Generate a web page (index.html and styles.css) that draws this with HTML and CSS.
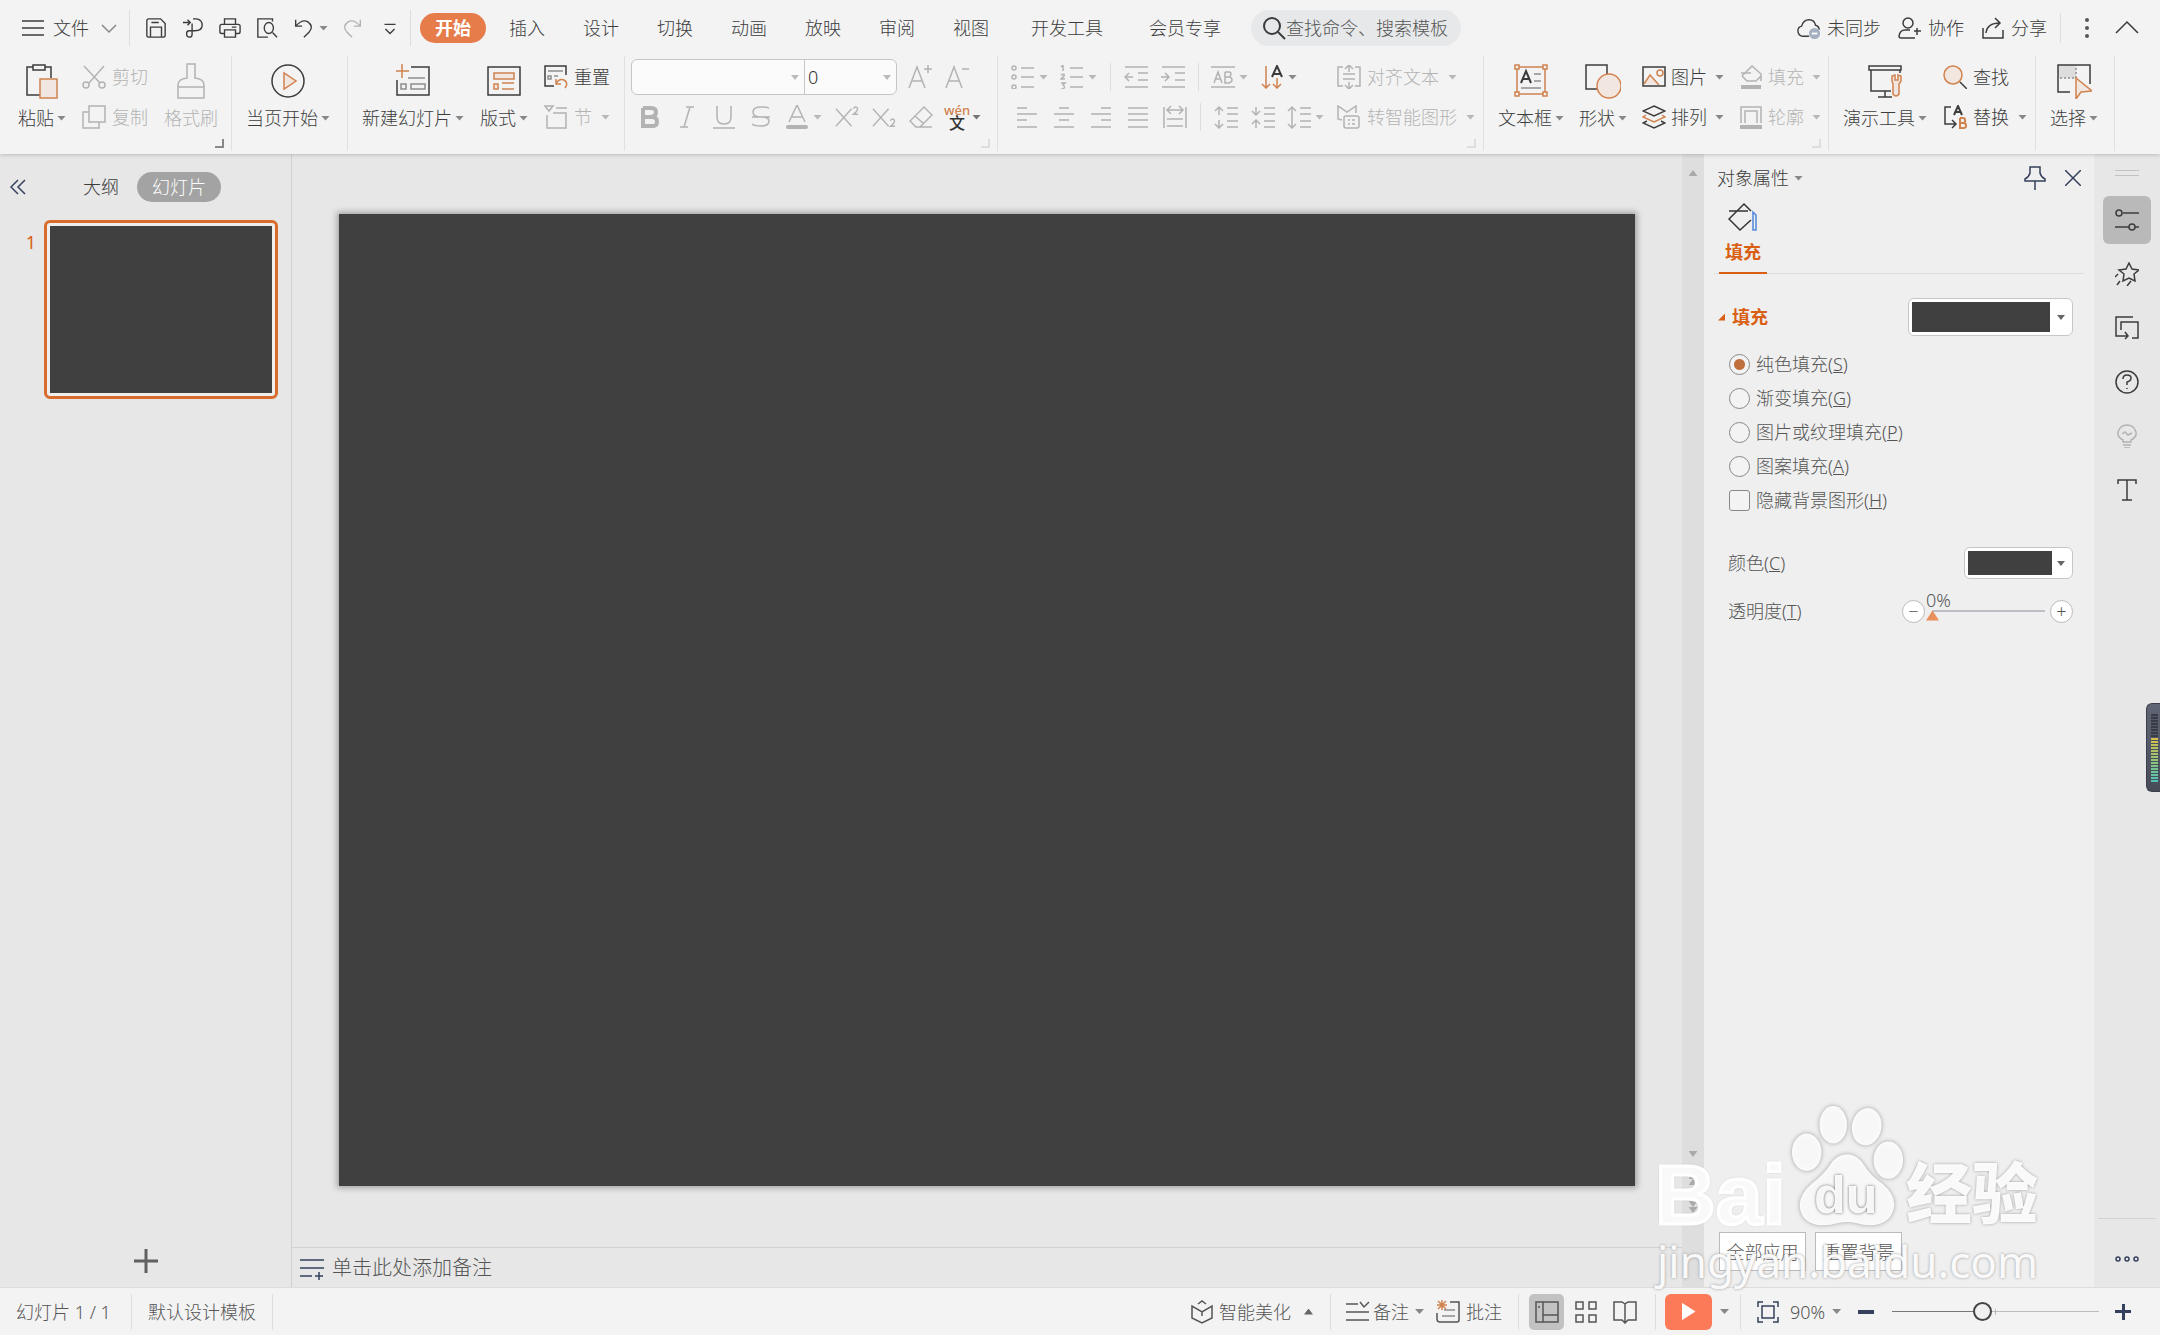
FILE: index.html
```html
<!DOCTYPE html>
<html lang="zh-CN">
<head>
<meta charset="utf-8">
<title>演示文稿</title>
<link rel="stylesheet" href="styles.css">
</head>
<body>
<svg class="sprite" aria-hidden="true">
  <symbol id="menu" viewBox="0 0 24 24"><path d="M1 5H23M1 12H23M1 19H23"/></symbol>
  <symbol id="down" viewBox="0 0 16 16"><path d="M1 5L8 12L15 5"/></symbol>
  <symbol id="save" viewBox="0 0 24 24"><path d="M4 2H17L22 7V20Q22 22 20 22H4Q2 22 2 20V4Q2 2 4 2ZM6 22V11H18V22M7 6H15"/></symbol>
  <symbol id="pdf" viewBox="0 0 24 24"><path d="M1 6H9M6 3L9 6L6 9M12 2H16Q22 3 22 9Q22 15 14 15H8Q5 15 5 18Q5 22 8 22Q11 22 11 19V7"/></symbol>
  <symbol id="print" viewBox="0 0 24 24"><path d="M6 8V2H18V8M6 18H3Q1 18 1 16V10Q1 8 3 8H21Q23 8 23 10V16Q23 18 21 18H18M6 14H18V22H6ZM14 11H19"/></symbol>
  <symbol id="preview" viewBox="0 0 24 24"><path d="M18 5V2H2V22H13M18 17L23 22"/><ellipse cx="14" cy="12" rx="5" ry="6"/></symbol>
  <symbol id="undo" viewBox="0 0 24 24"><path d="M4 3V10H11M4 10Q11 2 17 5Q24 10 19 16L13 22"/></symbol>
  <symbol id="redo" viewBox="0 0 24 24"><path d="M20 3V10H13M20 10Q13 2 7 5Q0 10 5 16L11 22"/></symbol>
  <symbol id="more" viewBox="0 0 24 24"><path d="M6 8H18M7 13L12 18L17 13"/></symbol>
  <symbol id="search" viewBox="0 0 24 24"><circle cx="10" cy="10" r="8" stroke-width="2"/><path d="M16 16L23 23" stroke-width="2"/></symbol>
  <symbol id="cloud" viewBox="0 0 26 24"><path d="M13 21H6Q1 20 1 15Q1 11 5 10Q7 3 13 3Q19 3 20 9Q24 10 24 14"/><circle cx="19" cy="18" r="6" fill="#a5afc1" stroke="none"/><path d="M16 18H22" stroke="#fff" stroke-width="2"/></symbol>
  <symbol id="person" viewBox="0 0 24 24"><circle cx="10" cy="7" r="5"/><path d="M12 14H7Q2 14 1 20Q1 22 3 22H17M16 15H23M19 12V19"/></symbol>
  <symbol id="share" viewBox="0 0 24 24"><path d="M2 12V22H22V14M5 17Q6 7 19 7M14 2L19 7L14 12"/></symbol>
  <symbol id="up" viewBox="0 0 24 24"><path d="M1 17L12 6L23 17"/></symbol>

  <symbol id="paste" viewBox="0 0 36 36"><path d="M9 4H3V32H16M21 4H27V15M9 2H21V7H9Z"/><path class="a f" d="M16 16H33V35H16Z"/></symbol>
  <symbol id="cut" viewBox="0 0 24 24"><path d="M2 1L18 18M22 1L7 18"/><circle cx="4" cy="20" r="3"/><circle cx="20" cy="20" r="3"/></symbol>
  <symbol id="copy" viewBox="0 0 24 24"><path d="M7 1H23V17H7ZM7 7H1V23H17V17"/></symbol>
  <symbol id="brush" viewBox="0 0 36 36"><path d="M14 1H22V15Q31 16 31 22V35H5V22Q5 16 14 15ZM5 24H31"/></symbol>
  <symbol id="playc" viewBox="0 0 36 36"><circle cx="18" cy="18" r="16"/><path class="a f" d="M14 10V26L26 18Z"/></symbol>
  <symbol id="newslide" viewBox="0 0 36 36"><path d="M16 4H34V32H2V17"/><path class="a" d="M1 8H14M7 1V15"/><path class="g" d="M13 15H30M6 21H11V26H6ZM16 21H30V26H16Z"/></symbol>
  <symbol id="layout" viewBox="0 0 36 36"><path d="M2 4H34V32H2Z"/><path class="a f" d="M8 10H28V16H8ZM8 21H12V26H8Z"/><path class="a" d="M16 20H28M16 26H28"/></symbol>
  <symbol id="reset" viewBox="0 0 24 24"><path d="M10 21H1V1H22V10"/><path class="g" d="M4 6H19M4 11H7V14H4ZM10 11H14"/><path class="a" d="M12 14V19H17M12 19Q15 13 20 15Q25 18 21 23"/></symbol>
  <symbol id="section" viewBox="0 0 24 24"><path d="M1 1H9L5 6ZM12 3H23M3 10V23H22V8H9"/></symbol>

  <symbol id="aplus" viewBox="0 0 24 24"><path d="M1 23L9 2L17 23M4 16H14M16 4H24M20 0V8"/></symbol>
  <symbol id="aminus" viewBox="0 0 24 24"><path d="M1 23L9 2L17 23M4 16H14M17 4H24"/></symbol>
  <symbol id="bold" viewBox="0 0 24 24"><path stroke-width="4" d="M5 3H13Q18 3 18 7Q18 12 12 12H5M5 12H14Q19 12 19 17Q19 21 14 21H5V3"/></symbol>
  <symbol id="italic" viewBox="0 0 24 24"><path d="M11 2H19M15 2L9 22M5 22H13"/></symbol>
  <symbol id="under" viewBox="0 0 24 24"><path d="M5 1V12Q5 19 12 19Q19 19 19 12V1M1 23H23"/></symbol>
  <symbol id="strike" viewBox="0 0 24 24"><path d="M20 3Q18 2 12 2Q4 2 4 7Q4 12 12 12Q20 12 20 16Q20 21 12 21Q5 21 3 19M3 12H21"/></symbol>
  <symbol id="fontcolor" viewBox="0 0 24 24"><path d="M4 17L12 0L20 17M7 12H17"/><path stroke-width="4" stroke-linecap="round" d="M3 22H21"/></symbol>
  <symbol id="sup" viewBox="0 0 26 24"><path d="M1 3L18 22M18 3L1 22M20 3Q21 0 24 2Q26 4 20 9H25"/></symbol>
  <symbol id="sub" viewBox="0 0 26 24"><path d="M1 3L18 22M18 3L1 22M20 16Q21 13 24 15Q26 17 20 22H25"/></symbol>
  <symbol id="erase" viewBox="0 0 24 24"><path d="M7 22L1 16L15 2L23 10L11 22ZM6 11L15 19M6 22H23"/></symbol>

  <symbol id="bullets" viewBox="0 0 24 24"><path d="M10 3H23M10 12H23M10 22H23"/><circle cx="3" cy="3" r="2"/><circle cx="3" cy="12" r="2"/><circle cx="3" cy="22" r="2"/></symbol>
  <symbol id="numbers" viewBox="0 0 24 24"><path d="M10 3H23M10 12H23M10 22H23M1 2L3 0V6M1 10Q5 8 4 11L1 14H5M1 18H5L3 20Q6 22 3 24H1"/></symbol>
  <symbol id="outdent" viewBox="0 0 24 24"><path d="M1 2H24M14 8H24M14 15H24M1 22H24M9 12H1M5 8L1 12L5 16"/></symbol>
  <symbol id="indent" viewBox="0 0 24 24"><path d="M1 2H24M14 8H24M14 15H24M1 22H24M0 12H8M4 8L8 12L4 16"/></symbol>
  <symbol id="ab" viewBox="0 0 24 24"><path d="M0 2H24M0 22H24M3 18L7 7L11 18M5 14H9M14 7V18H18Q21 17 21 15Q21 12 18 12H14M18 12Q20 11 20 9Q20 7 18 7H14"/></symbol>
  <symbol id="sort" viewBox="0 0 24 24"><path class="a" d="M6 1V23M2 19L6 23L10 19M17 13V23M13 19L17 23L21 19"/><path stroke-width="2" d="M12 12L17 1L22 12M14 9H20"/></symbol>
  <symbol id="aligntext" viewBox="0 0 24 24"><path d="M6 2H1V21H6M18 2H23V21H18M6 9H18M6 14H18M12 7V0M8 4L12 0L16 4M12 17V24M8 20L12 24L16 20"/></symbol>
  <symbol id="left" viewBox="0 0 24 24"><path d="M2 3H12M2 9H22M2 15H12M2 22H22"/></symbol>
  <symbol id="center" viewBox="0 0 24 24"><path d="M7 3H17M2 9H22M7 15H17M2 22H22"/></symbol>
  <symbol id="right" viewBox="0 0 24 24"><path d="M12 3H22M2 9H22M12 15H22M2 22H22"/></symbol>
  <symbol id="justify" viewBox="0 0 24 24"><path d="M2 3H22M2 9H22M2 15H22M2 22H22"/></symbol>
  <symbol id="distribute" viewBox="0 0 24 24"><path d="M1 2V23M23 2V23M4 14H20M4 21H20M4 5H20M8 1L4 5L8 9M16 1L20 5L16 9"/></symbol>
  <symbol id="spaceup" viewBox="0 0 24 24"><path d="M13 3H24M13 9H24M13 16H24M13 22H24M5 10V2M1 6L5 2L9 6M5 15V23M1 19L5 23L9 19"/></symbol>
  <symbol id="spacedown" viewBox="0 0 24 24"><path d="M13 3H24M13 9H24M13 16H24M13 22H24M5 2V10M1 6L5 10L9 6M5 23V15M1 19L5 15L9 19"/></symbol>
  <symbol id="linespace" viewBox="0 0 24 24"><path d="M13 3H24M13 9H24M13 16H24M13 22H24M5 2V23M1 6L5 2L9 6M1 19L5 23L9 19"/></symbol>
  <symbol id="smart" viewBox="0 0 24 24"><path d="M5 15L1 14V1L10 7L19 1V8"/><rect x="7" y="11" width="15" height="12" rx="2"/><path d="M11 15H13M15 15H18M11 19H13M15 19H18"/></symbol>

  <symbol id="textbox" viewBox="0 0 36 36"><path class="a" d="M4 4H32V31H4Z"/><path class="a bg" d="M2 2H6V6H2ZM30 2H34V6H30ZM2 29H6V33H2ZM30 29H34V33H30Z"/><path stroke-width="2" d="M8 20L13 8L18 20M10 16H16"/><path class="g" d="M21 11H28M21 18H28M8 25H28"/></symbol>
  <symbol id="shapes" viewBox="0 0 36 36"><path d="M1 2H22V26H1Z"/><circle class="a f" cx="24" cy="23" r="12"/></symbol>
  <symbol id="picture" viewBox="0 0 24 24"><path d="M1 2H23V21H1Z"/><path class="a f" d="M2 19L8 10L17 20"/><circle class="a" cx="18" cy="8" r="3"/></symbol>
  <symbol id="arrange" viewBox="0 0 24 24"><path d="M12 1L23 6L12 11L1 6Z"/><path class="a" d="M4 10L1 12L12 17L23 12L20 10"/><path d="M5 16L1 18L12 23L23 18L19 16"/></symbol>
  <symbol id="fillc" viewBox="0 0 24 24"><path d="M3 11L13 1L22 9V16M3 11L8 16H17L22 11M2 8H12"/><path stroke-width="4" d="M2 22H22"/></symbol>
  <symbol id="outline" viewBox="0 0 24 24"><path d="M2 18V2H22V18M6 18V6H18V18"/><path stroke-width="4" d="M1 22H23"/></symbol>
  <symbol id="present" viewBox="0 0 36 36"><path d="M2 3H34V7H2ZM4 7V28H24M18 28V34M11 34H25M33 7V10"/><path class="a f" d="M25 13V18L26 21V31Q29 35 32 31V21L34 18V13L31 12V17H28V12Z"/></symbol>
  <symbol id="find" viewBox="0 0 24 24"><circle class="a f" cx="10" cy="10" r="9"/><path d="M17 17L24 24"/></symbol>
  <symbol id="replace" viewBox="0 0 24 24"><path d="M8 2H2V19H12M9 15L13 19L9 23"/><path stroke-width="2" d="M11 10L15 1L19 10M13 7H18"/><path class="a" stroke-width="2" d="M17 13V23H21Q24 22 23 20Q23 18 20 18H17M20 18Q23 17 22 15Q22 13 20 13H17"/></symbol>
  <symbol id="select" viewBox="0 0 36 36"><path fill="#ddd" stroke="none" d="M2 2H20V15H2Z"/><path d="M14 29H2V2H34V21"/><path class="g" stroke-dasharray="2 2" d="M4 15H20V3"/><path class="a f" d="M20 15V36L25 29L36 28Z"/></symbol>

  <symbol id="collapse" viewBox="0 0 16 16"><path d="M8 1L1 8L8 15M15 1L8 8L15 15"/></symbol>
  <symbol id="plus" viewBox="0 0 24 24"><path stroke-width="3" d="M0 12H24M12 0V24"/></symbol>
  <symbol id="notes" viewBox="0 0 24 24"><path d="M0 4H24M0 12H24M0 20H12M15 20H23M19 16V24"/></symbol>
  <symbol id="pin" viewBox="0 0 24 24"><path d="M7 1H17V7Q18 11 22 13V15H2V13Q6 11 7 7ZM12 15V24"/></symbol>
  <symbol id="close" viewBox="0 0 16 16"><path d="M0 0L16 16M16 0L0 16"/></symbol>
  <symbol id="bucket" viewBox="0 0 30 30"><path d="M23 9L16 2L1 17L12 28L23 18M1 9H20"/><path stroke="#4f86dc" d="M25 28V10L28 13V28Z"/></symbol>
  <symbol id="settings" viewBox="0 0 24 24"><path d="M8 5H24M0 19H14M20 19H24"/><circle cx="4" cy="5" r="3"/><circle cx="17" cy="19" r="3"/></symbol>
  <symbol id="star" viewBox="0 0 24 24"><path d="M14 1L17 7L24 8L19 12L20 19L14 16L8 19L9 12L4 8L11 7ZM3 12L0 15M5 19L2 23M16 19L12 24"/></symbol>
  <symbol id="swap" viewBox="0 0 24 24"><path d="M18 1H1V20H13M10 16L13 20L10 23M6 14V6H23V22H17"/></symbol>
  <symbol id="help" viewBox="0 0 24 24"><circle cx="12" cy="12" r="11"/><path d="M8 9Q8 5 12 5Q16 5 16 8Q16 11 12 12V15M12 18V19"/></symbol>
  <symbol id="bulb" viewBox="0 0 24 24"><path d="M8 18V16Q2 13 3 8Q5 1 12 1Q19 1 21 8Q22 13 16 16V18ZM8 21H16M9 24H15M7 10L10 8L13 11L17 9"/></symbol>
  <symbol id="text" viewBox="0 0 24 24"><path d="M3 6V2H21V6M12 2V22M7 22H17"/></symbol>
  <symbol id="dots" viewBox="0 0 24 8"><circle cx="3" cy="4" r="2"/><circle cx="12" cy="4" r="2"/><circle cx="21" cy="4" r="2"/></symbol>
  <symbol id="box" viewBox="0 0 24 24"><path d="M8 4L12 1L16 4M2 6V18L12 23L22 18V6L12 12ZM12 12V16"/></symbol>
  <symbol id="remark" viewBox="0 0 24 24"><path d="M0 4H12M14 2L18 7L23 2M0 12H23M0 20H23"/></symbol>
  <symbol id="comment" viewBox="0 0 24 24"><path d="M14 2H23V20Q23 22 21 22H4Q1 22 1 19V13"/><path class="g" d="M8 10H19M6 16H19"/><path class="a" d="M6 0V10M1 5H11M2 1L10 9M10 1L2 9"/></symbol>
  <symbol id="normal" viewBox="0 0 24 24"><path d="M1 2H23V22H1ZM8 2V22M8 15H23M4 6V8"/></symbol>
  <symbol id="grid" viewBox="0 0 24 24"><path d="M2 2H9V9H2ZM15 2H22V9H15ZM2 15H9V22H2ZM15 15H22V22H15Z"/></symbol>
  <symbol id="book" viewBox="0 0 24 24"><path d="M12 4L9 2H1V20H9L12 23L15 20H23V2H15L12 4V23"/></symbol>
  <symbol id="fit" viewBox="0 0 24 24"><path d="M2 7V2H7M17 2H22V7M22 17V22H17M7 22H2V17M6 6H18V18H6Z"/></symbol>
</svg>

<div class="app">
  <header class="menu">
    <button class="file"><svg class="i"><use href="#menu"/></svg>文件<svg class="i i16 light"><use href="#down"/></svg></button>
    <span class="vline"></span>
    <div class="quick">
      <button class="tool" aria-label="保存"><svg class="i"><use href="#save"/></svg></button>
      <button class="tool" aria-label="输出PDF"><svg class="i"><use href="#pdf"/></svg></button>
      <button class="tool" aria-label="打印"><svg class="i"><use href="#print"/></svg></button>
      <button class="tool" aria-label="预览"><svg class="i"><use href="#preview"/></svg></button>
      <button class="tool drop" aria-label="撤销"><svg class="i"><use href="#undo"/></svg></button>
      <button class="tool off" aria-label="恢复"><svg class="i"><use href="#redo"/></svg></button>
      <button class="tool" aria-label="更多"><svg class="i"><use href="#more"/></svg></button>
    </div>
    <span class="vline"></span>
    <nav class="tabs">
      <button class="tab active">开始</button>
      <button class="tab">插入</button><button class="tab">设计</button><button class="tab">切换</button><button class="tab">动画</button><button class="tab">放映</button><button class="tab">审阅</button><button class="tab">视图</button>
      <button class="tab wide">开发工具</button><button class="tab wide">会员专享</button>
    </nav>
    <label class="find"><svg class="i"><use href="#search"/></svg><input type="text" placeholder="查找命令、搜索模板" aria-label="查找命令"></label>
    <div class="account">
      <button><svg class="i"><use href="#cloud"/></svg>未同步</button>
      <button><svg class="i"><use href="#person"/></svg>协作</button>
      <button><svg class="i"><use href="#share"/></svg>分享</button>
      <span class="vline"></span>
      <button class="kebab" aria-label="选项"><i></i><i></i><i></i></button>
      <button aria-label="收起"><svg class="i"><use href="#up"/></svg></button>
    </div>
  </header>

  <section class="ribbon">
    <div class="group clip corner">
      <button class="big"><svg class="i i36"><use href="#paste"/></svg><span class="drop">粘贴</span></button>
      <div class="stack off">
        <button class="item"><svg class="i"><use href="#cut"/></svg>剪切</button>
        <button class="item"><svg class="i"><use href="#copy"/></svg>复制</button>
      </div>
      <button class="big off"><svg class="i i36"><use href="#brush"/></svg><span>格式刷</span></button>
    </div>
    <div class="group">
      <button class="big"><svg class="i i36"><use href="#playc"/></svg><span class="drop">当页开始</span></button>
    </div>
    <div class="group">
      <button class="big"><svg class="i i36"><use href="#newslide"/></svg><span class="drop">新建幻灯片</span></button>
      <button class="big"><svg class="i i36"><use href="#layout"/></svg><span class="drop">版式</span></button>
      <div class="stack">
        <button class="item"><svg class="i"><use href="#reset"/></svg>重置</button>
        <button class="item off drop"><svg class="i"><use href="#section"/></svg>节</button>
      </div>
    </div>
    <div class="group fonts corner soft">
      <div class="stack">
        <div class="row">
          <div class="combo">
            <span class="pick name"><select aria-label="字体"><option></option></select></span>
            <span class="pick size"><select aria-label="字号"><option>0</option></select></span>
          </div>
          <button class="tool off" aria-label="增大字号"><svg class="i"><use href="#aplus"/></svg></button>
          <button class="tool off" aria-label="减小字号"><svg class="i"><use href="#aminus"/></svg></button>
        </div>
        <div class="row off">
          <button class="tool" aria-label="加粗"><svg class="i"><use href="#bold"/></svg></button>
          <button class="tool" aria-label="倾斜"><svg class="i"><use href="#italic"/></svg></button>
          <button class="tool" aria-label="下划线"><svg class="i"><use href="#under"/></svg></button>
          <button class="tool" aria-label="删除线"><svg class="i"><use href="#strike"/></svg></button>
          <button class="tool drop" aria-label="字体颜色"><svg class="i"><use href="#fontcolor"/></svg></button>
          <button class="tool" aria-label="上标"><svg class="i"><use href="#sup"/></svg></button>
          <button class="tool" aria-label="下标"><svg class="i"><use href="#sub"/></svg></button>
          <button class="tool" aria-label="清除格式"><svg class="i"><use href="#erase"/></svg></button>
          <button class="tool drop pinyin" aria-label="拼音"><span><b>wén</b><em>文</em></span></button>
        </div>
      </div>
    </div>
    <div class="group para corner soft">
      <div class="stack off">
        <div class="row">
          <button class="tool drop" aria-label="项目符号"><svg class="i"><use href="#bullets"/></svg></button>
          <button class="tool drop" aria-label="编号"><svg class="i"><use href="#numbers"/></svg></button>
          <span class="vsep"></span>
          <button class="tool" aria-label="减少缩进"><svg class="i"><use href="#outdent"/></svg></button>
          <button class="tool" aria-label="增加缩进"><svg class="i"><use href="#indent"/></svg></button>
          <span class="vsep"></span>
          <button class="tool drop" aria-label="字符缩放"><svg class="i"><use href="#ab"/></svg></button>
          <button class="tool drop on" aria-label="文字方向"><svg class="i"><use href="#sort"/></svg></button>
        </div>
        <div class="row second">
          <button class="tool" aria-label="左对齐"><svg class="i"><use href="#left"/></svg></button>
          <button class="tool" aria-label="居中"><svg class="i"><use href="#center"/></svg></button>
          <button class="tool" aria-label="右对齐"><svg class="i"><use href="#right"/></svg></button>
          <button class="tool" aria-label="两端对齐"><svg class="i"><use href="#justify"/></svg></button>
          <button class="tool" aria-label="分散对齐"><svg class="i"><use href="#distribute"/></svg></button>
          <span class="vsep"></span>
          <button class="tool" aria-label="增加行距"><svg class="i"><use href="#spaceup"/></svg></button>
          <button class="tool" aria-label="减少行距"><svg class="i"><use href="#spacedown"/></svg></button>
          <button class="tool drop" aria-label="行距"><svg class="i"><use href="#linespace"/></svg></button>
        </div>
      </div>
      <div class="stack off">
        <button class="item drop"><svg class="i"><use href="#aligntext"/></svg>对齐文本</button>
        <button class="item drop"><svg class="i"><use href="#smart"/></svg>转智能图形</button>
      </div>
    </div>
    <div class="group insert corner soft">
      <button class="big"><svg class="i i36"><use href="#textbox"/></svg><span class="drop">文本框</span></button>
      <button class="big"><svg class="i i36"><use href="#shapes"/></svg><span class="drop">形状</span></button>
      <div class="stack">
        <button class="item drop"><svg class="i"><use href="#picture"/></svg>图片</button>
        <button class="item drop"><svg class="i"><use href="#arrange"/></svg>排列</button>
      </div>
      <div class="stack off">
        <button class="item drop"><svg class="i"><use href="#fillc"/></svg>填充</button>
        <button class="item drop"><svg class="i"><use href="#outline"/></svg>轮廓</button>
      </div>
    </div>
    <div class="group">
      <button class="big"><svg class="i i36"><use href="#present"/></svg><span class="drop">演示工具</span></button>
      <div class="stack">
        <button class="item"><svg class="i"><use href="#find"/></svg>查找</button>
        <button class="item drop"><svg class="i"><use href="#replace"/></svg>替换</button>
      </div>
    </div>
    <div class="group">
      <button class="big"><svg class="i i36"><use href="#select"/></svg><span class="drop">选择</span></button>
    </div>
  </section>

  <main class="work">
    <aside class="slides">
      <div class="slides-head">
        <button class="navy" aria-label="折叠"><svg class="i i16"><use href="#collapse"/></svg></button>
        <button class="outline-tab">大纲</button>
        <button class="slides-tab">幻灯片</button>
      </div>
      <div class="thumb-row"><span>1</span><div class="thumb"><div></div></div></div>
      <button class="add" aria-label="新建幻灯片"><svg class="i"><use href="#plus"/></svg></button>
    </aside>
    <section class="editor">
      <div class="stage"><div class="slide"></div></div>
      <div class="notes"><svg class="i navy"><use href="#notes"/></svg>单击此处添加备注</div>
    </section>
    <div class="scroll"><i class="t up"></i><span></span><i class="t"></i><div class="pair"><i class="t up"></i><i class="t up"></i></div><div class="pair"><i class="t"></i><i class="t"></i></div></div>
    <aside class="props">
      <div class="props-head"><h2 class="drop">对象属性</h2><button class="navy" aria-label="固定"><svg class="i"><use href="#pin"/></svg></button><button class="navy" aria-label="关闭"><svg class="i i16"><use href="#close"/></svg></button></div>
      <div class="props-tabs"><button><svg class="i i30"><use href="#bucket"/></svg>填充</button></div>
      <div class="sect"><h3>填充</h3><span class="pick swatch"><select aria-label="填充样式"><option></option></select></span></div>
      <div class="choices">
        <label><input type="radio" name="fill" checked>纯色填充(<u>S</u>)</label>
        <label><input type="radio" name="fill">渐变填充(<u>G</u>)</label>
        <label><input type="radio" name="fill">图片或纹理填充(<u>P</u>)</label>
        <label><input type="radio" name="fill">图案填充(<u>A</u>)</label>
        <label><input type="checkbox">隐藏背景图形(<u>H</u>)</label>
      </div>
      <div class="prop"><label for="color">颜色(<u>C</u>)</label><span class="pick swatch small"><select id="color"><option></option></select></span></div>
      <div class="prop alpha"><label for="alpha">透明度(<u>T</u>)</label><div class="stepper"><button aria-label="减少">−</button><div class="track"><output>0%</output><input id="alpha" type="range" value="0"></div><button aria-label="增加">+</button></div></div>
      <div class="actions"><button>全部应用</button><button>重置背景</button></div>
    </aside>
    <nav class="rail">
      <i class="grip"></i>
      <button class="active" aria-label="属性"><svg class="i"><use href="#settings"/></svg></button>
      <button aria-label="动画"><svg class="i"><use href="#star"/></svg></button>
      <button aria-label="切换"><svg class="i"><use href="#swap"/></svg></button>
      <button aria-label="帮助"><svg class="i"><use href="#help"/></svg></button>
      <button class="off" aria-label="灵感"><svg class="i"><use href="#bulb"/></svg></button>
      <button aria-label="文本"><svg class="i"><use href="#text"/></svg></button>
      <button class="rail-more navy" aria-label="更多"><svg class="i"><use href="#dots"/></svg></button>
    </nav>
  </main>

  <footer class="status">
    <span class="count">幻灯片 1 / 1</span><span class="vline"></span><span class="template">默认设计模板</span><span class="vline"></span>
    <div class="status-right">
      <button class="beautify"><svg class="i"><use href="#box"/></svg>智能美化<i class="t up"></i></button>
      <span class="vline"></span>
      <div class="remarks"><button class="drop tight"><svg class="i"><use href="#remark"/></svg>备注</button><button><svg class="i"><use href="#comment"/></svg>批注</button></div>
      <span class="vline"></span>
      <div class="views">
        <button class="view active" aria-label="普通视图"><svg class="i"><use href="#normal"/></svg></button>
        <button class="view" aria-label="浏览视图"><svg class="i"><use href="#grid"/></svg></button>
        <button class="view" aria-label="阅读视图"><svg class="i"><use href="#book"/></svg></button>
      </div>
      <span class="vline"></span>
      <button class="play drop" aria-label="放映"><span></span></button>
      <span class="vline"></span>
      <div class="zoom"><button class="drop"><svg class="i navy"><use href="#fit"/></svg>90%</button><button class="step minus" aria-label="缩小"></button><input type="range" value="43" aria-label="缩放"><button class="step more" aria-label="放大"></button></div>
    </div>
  </footer>

  <div class="meter"><span></span><b></b></div>

  <div class="mark">
    <span class="bai">Bai</span>
    <svg class="paw" viewBox="0 0 120 126"><g fill="#fff" fill-opacity=".92"><ellipse cx="18" cy="48" rx="15" ry="19"/><ellipse cx="45" cy="20" rx="14" ry="19"/><ellipse cx="79" cy="22" rx="15" ry="19" transform="rotate(10 79 22)"/><ellipse cx="101" cy="56" rx="15" ry="19"/><path d="M59 50Q70 50 77 62Q82 71 95 80Q108 91 107 103Q104 120 87 122Q78 123 68 120Q59 118 50 120Q40 123 29 122Q13 119 11 104Q10 91 23 80Q35 71 41 62Q48 50 59 50Z"/></g></svg>
    <span class="du">du</span>
    <span class="jy">经验</span>
    <span class="url">jingyan.baidu.com</span>
  </div>
</div>
</body>
</html>
```
FILE: styles.css
```css
* { box-sizing: border-box; }

body {
  --accent: #d0824f;
  --navy: #35405c;
  margin: 0;
  font: 300 18px/24px "Noto Sans", "Noto Sans CJK SC", sans-serif;
  color: #3c3c3c;
  background: #f3f3f3;
}

button, input, select { font: inherit; color: inherit; }
button { border: 0; padding: 0; background: none; display: flex; align-items: center; white-space: nowrap; }
h2, h3 { margin: 0; font: inherit; }
.sprite { display: none; }

/* icons */
.i { width: 24px; height: 24px; flex: none; fill: none; stroke: currentColor; stroke-width: 1.5; overflow: visible; }
.i16 { width: 16px; height: 16px; }
.i30 { width: 30px; height: 30px; }
.i36 { width: 36px; height: 36px; }
.a { stroke: var(--accent); }
.f { fill: #f2e7e0; }
.g { stroke: #8f8f8f; }
.bg { fill: #f3f3f3; }
.light { color: #888; }
.navy { color: var(--navy); }
.off { color: #b3b3b3; }
.on { color: #3c3c3c; }

.drop::after {
  content: "";
  flex: none;
  width: 9px;
  height: 5px;
  margin-left: 3px;
  background: #888;
  clip-path: polygon(0 0, 100% 0, 50% 100%);
}
.off .drop:not(.on)::after, .off.drop::after { background: #b8b8b8; }
.t { display: block; width: 9px; height: 6px; background: #aaa; clip-path: polygon(0 0, 100% 0, 50% 100%); }
.t.up { clip-path: polygon(50% 0, 100% 100%, 0 100%); }
.vline { width: 1px; height: 36px; background: #dedede; flex: none; }

.app { position: relative; display: flex; flex-direction: column; min-height: 100vh; overflow: hidden; }

/* menu bar */
.menu { display: flex; align-items: center; height: 56px; }
.file { gap: 8px; width: 129px; padding-left: 21px; }
.file .light { margin-left: 4px; }
.quick { display: flex; padding: 0 2px 0 7px; }
.tool { width: 37px; height: 36px; justify-content: center; flex: none; }
.tool.drop { width: 49px; justify-content: flex-start; padding-left: 6px; }
.tool.drop::after { margin-left: 4px; }
.quick .i { padding: 1px; }
.tabs { display: flex; align-items: center; padding-left: 9px; }
.tab { padding: 0 19px; height: 30px; }
.tab.wide { padding: 0 23px; }
.tab.active { padding: 0 15px; margin-right: 4px; border-radius: 15px; background: #e67c4a; color: #fff; font-weight: 700; }
.find { display: flex; align-items: center; width: 210px; height: 36px; margin-left: 7px; padding-left: 11px; border-radius: 18px; background: #e6e8ea; }
.find input { width: 172px; padding: 0; border: 0; background: none; }
.find input::placeholder { color: #555; opacity: 1; }
.account { display: flex; align-items: center; gap: 17px; margin-left: auto; padding-right: 21px; }
.account button { gap: 6px; }
.account .vline { margin-left: -4px; height: 30px; }
.account .kebab { flex-direction: column; gap: 4px; width: 24px; margin: 0 -1px 0 -3px; }
.kebab i { width: 4px; height: 4px; border-radius: 2px; background: #555; }

/* ribbon */
.ribbon {
  display: grid;
  grid-template-columns: 232px 116px 277px 373px 486px 345px 207px 79px;
  height: 98px;
  position: relative;
  box-shadow: 0 1px 4px #00000030;
  clip-path: inset(0 0 -6px 0);
}
.group { position: relative; display: flex; gap: 16px; height: 95px; padding: 1px 0 0 14px; border-right: 1px solid #e0e0e0; }
.clip { padding-left: 18px; }
.fonts { padding-left: 6px; }
.para { padding-left: 7px; gap: 0; }
.para .stack:first-child { width: 332px; }
.corner::after { content: ""; position: absolute; right: 7px; bottom: 3px; width: 7px; height: 7px; border: solid #888; border-width: 0 2px 2px 0; }
.corner.soft::after { border-color: #ddd; }
.big { flex-direction: column; gap: 4px; height: 80px; padding-top: 6px; }
.big span { display: flex; align-items: center; height: 30px; }
.stack { display: flex; flex-direction: column; align-items: flex-start; }
.row { display: flex; align-items: center; height: 40px; }
.second { padding-left: 3px; }
.item { height: 40px; gap: 6px; }
.insert .item { gap: 5px; }
.insert { gap: 15px; }
.vsep { width: 1px; height: 28px; margin: 0 6px 0 7px; background: #dedede; }
.combo { display: flex; width: 266px; height: 36px; margin-right: 4px; border: 1px solid #c6c6c6; border-radius: 6px; background: #fbfbfb; color: #333; }
.pick { position: relative; display: flex; }
.pick::after { content: ""; position: absolute; right: 5px; top: calc(50% - 2px); width: 8px; height: 5px; background: #bbb; clip-path: polygon(0 0, 100% 0, 50% 100%); pointer-events: none; }
.pick select { width: 100%; appearance: none; border: 0; padding: 0 3px; background: none; outline: 0; }
.pick.name { flex: 1; border-right: 1px solid #c6c6c6; }
.pick.size { width: 91px; }
.pinyin span { display: flex; flex-direction: column; align-items: center; width: 24px; line-height: 13px; }
.pinyin b { font-weight: 500; font-size: 13px; color: var(--accent); }
.pinyin em { font-style: normal; font-weight: 500; font-size: 16px; color: #333; }
.off .pinyin.drop::after { background: #777; margin-left: 3px; }

/* work area */
.work { display: grid; grid-template-columns: 292px 1fr 22px 390px 66px; flex: 1; background: #e7e7e7; }
.slides { display: flex; flex-direction: column; border-right: 1px solid #d2d2d2; }
.slides-head { display: flex; align-items: center; padding: 18px 0 0 10px; }
.outline-tab { margin: 0 18px 0 57px; }
.slides-tab { height: 30px; padding: 0 15px; border-radius: 15px; background: #a3a3a3; color: #fff; }
.thumb-row { display: flex; padding: 18px 13px 0 0; }
.thumb-row span { width: 44px; padding: 10px 8px 0 0; text-align: right; color: #d95f14; font: 400 18px/24px "Noto Sans", sans-serif; }
.thumb { flex: 1; padding: 3px; border: 3px solid #d86c2c; border-radius: 6px; background: #eee; }
.thumb div { aspect-ratio: 4 / 3; background: #404040; }
.add { align-self: center; margin: auto 0 14px; color: #606060; }
.editor { display: flex; flex-direction: column; }
.stage { flex: 1; padding: 60px 47px 0; }
.slide { aspect-ratio: 4 / 3; background: #404040; box-shadow: 0 0 6px 2px #0000004d; }
.notes { display: flex; align-items: center; gap: 8px; height: 40px; padding-left: 8px; border-top: 1px solid #d2d2d2; font-size: 20px; color: #555; }
.scroll { display: flex; flex-direction: column; align-items: center; gap: 16px; padding: 16px 0 74px; background: #dedede; }
.scroll > span { flex: 1; }

/* property pane */
.props { display: flex; flex-direction: column; padding-bottom: 16px; background: #efefef; color: #555; }
.props-head { display: flex; align-items: center; gap: 18px; height: 48px; padding: 0 13px; }
.props-head h2 { display: flex; align-items: center; margin-right: auto; color: #3c3c3c; }
.props-head h2::after { margin-left: 5px; }
.props-tabs { margin: 0 10px; padding-left: 5px; border-bottom: 1px solid #ddd; }
.props-tabs button { flex-direction: column; width: 48px; height: 72px; gap: 8px; margin-bottom: -1px; border-bottom: 2px solid #d95f14; color: #d95f14; font-weight: 700; }
.props-tabs .i { color: #333; }
.sect { display: flex; align-items: center; justify-content: space-between; height: 38px; margin: 24px 21px 0 14px; }
.sect h3 { display: flex; align-items: center; gap: 7px; color: #d95f14; font-weight: 700; }
.sect h3::before { content: ""; width: 7px; height: 7px; background: #d95f14; clip-path: polygon(100% 0, 100% 100%, 0 100%); }
.swatch { width: 165px; height: 38px; padding: 3px 22px 3px 3px; border: 1px solid #c6c6c6; border-radius: 6px; background: #fff; }
.swatch select { background: #404040; }
.swatch.small { width: 109px; height: 32px; padding-right: 20px; }
.swatch::after { right: 7px; background: #666; }
.choices { display: flex; flex-direction: column; padding: 11px 0 0 25px; }
.choices label { display: flex; align-items: center; height: 34px; }
.choices input { appearance: none; width: 21px; height: 21px; margin: 0 6px 0 0; border: 1px solid #888; border-radius: 50%; background: #f3f3f3; }
.choices input[type="checkbox"] { border-radius: 3px; }
.choices input:checked { background: radial-gradient(#c0703d 5px, #f3f3f3 6px); }
.prop { display: flex; align-items: center; justify-content: space-between; height: 32px; margin: 30px 21px 0 24px; }
.alpha { margin-top: 16px; }
.stepper { display: flex; gap: 1px; }
.stepper button { width: 23px; height: 23px; justify-content: center; border: 1px solid #bbb; border-radius: 50%; background: #fff; line-height: 20px; }
.track { position: relative; width: 123px; height: 23px; }
.track output { position: absolute; left: 0; top: -12px; }
.track input { appearance: none; width: 119px; height: 20px; margin: 2px 0; background: linear-gradient(#bcbfc6, #bcbfc6) 6px 8px / 100% 2px no-repeat; }
.track input::-webkit-slider-thumb { appearance: none; width: 13px; height: 10px; margin-top: 8px; background: #e8905c; clip-path: polygon(50% 0, 100% 100%, 0 100%); }
.actions { display: flex; gap: 9px; margin-top: auto; padding-left: 15px; }
.actions button { width: 87px; height: 39px; justify-content: center; border: 1px solid #bbb; background: #fff; }

/* side rail */
.rail { display: flex; flex-direction: column; align-items: center; gap: 6px; padding: 16px 0 0; }
.grip { width: 24px; height: 6px; margin-bottom: 14px; border: solid #c2c2c2; border-width: 1px 0; }
.rail button { width: 48px; height: 48px; justify-content: center; border-radius: 6px; }
.rail .active { background: #b9b9b9; }
.rail .rail-more { width: 58px; height: 69px; margin-top: auto; border-top: 1px solid #d2d2d2; border-radius: 0; padding-top: 12px; align-items: flex-start; }
.rail-more .i { height: 56px; }

/* status bar */
.status { display: flex; align-items: center; height: 48px; border-top: 1px solid #ddd; color: #555; }
.count { width: 131px; padding-left: 16px; }
.template { width: 140px; padding-left: 16px; }
.status-right, .views, .remarks, .zoom { display: flex; align-items: center; }
.status-right { margin-left: auto; }
.beautify { width: 140px; gap: 5px; }
.beautify .t { margin-left: 8px; background: #666; }
.remarks { width: 187px; gap: 12px; padding-left: 15px; }
.remarks button { gap: 6px; }
.remarks .tight { gap: 3px; }
.views { width: 136px; padding-left: 10px; gap: 4px; }
.view { width: 35px; height: 36px; justify-content: center; border-radius: 5px; }
.view.active { background: #c2c2c2; }
.play { width: 84px; padding-left: 9px; }
.play span { display: grid; place-items: center; width: 47px; height: 36px; border-radius: 6px; background: #fc7a58; }
.play span::before { content: ""; width: 14px; height: 18px; background: #fff; clip-path: polygon(0 0, 100% 50%, 0 100%); }
.play::after { margin-left: 8px; }
.zoom { width: 419px; padding-left: 15px; }
.zoom .drop { gap: 10px; }
.zoom .drop::after { margin-left: -3px; }
.step { width: 16px; height: 16px; }
.minus { margin: 0 18px 0 17px; background: linear-gradient(var(--navy), var(--navy)) center / 16px 4px no-repeat; }
.more { margin-left: 16px; background: linear-gradient(var(--navy), var(--navy)) center / 16px 3px no-repeat, linear-gradient(var(--navy), var(--navy)) center / 3px 16px no-repeat; }
.zoom input { appearance: none; width: 207px; height: 20px; margin: 0; background: linear-gradient(90deg, #777 43%, #bbb 43%) center / 100% 1px no-repeat, linear-gradient(#bbb, #bbb) 50% 50% / 1px 6px no-repeat; }
.zoom input::-webkit-slider-thumb { appearance: none; width: 19px; height: 19px; border: 2px solid #444; border-radius: 50%; background: #f0f0f0; }

/* desktop performance meter docked at the window edge */
.meter { position: absolute; right: 0; top: 703px; width: 14px; height: 89px; padding: 10px 2px 10px 4px; border: 1px solid #3c404c; border-right: 0; border-radius: 6px 0 0 6px; background: linear-gradient(#606575, #484c58); }
.meter span, .meter b { display: block; }
.meter span { height: 24px; background: repeating-linear-gradient(#383c46 0 2px, #555a68 2px 3px); }
.meter b { height: 44px; background: repeating-linear-gradient(transparent 0 2px, #4c5160 2px 3px), linear-gradient(#d8c04c, #8cc47c 55%, #4cc4b8); }

/* site watermark */
.mark { position: absolute; right: 115px; bottom: 20px; width: 390px; height: 214px; color: #fffffff0; text-shadow: 0 0 3px #999; pointer-events: none; white-space: nowrap; }
.mark > * { position: absolute; }
.bai { left: 0; top: 51px; font: 700 84px/86px "Liberation Sans", sans-serif; -webkit-text-stroke: 3px #fff; }
.paw { left: 134px; top: 4px; width: 118px; height: 124px; filter: drop-shadow(0 0 2px #999); }
.du { left: 159px; top: 67px; font: 700 52px/54px "Liberation Sans", sans-serif; text-shadow: 0 0 3px #666; }
.jy { left: 251px; top: 48px; font: 900 66px/80px "Noto Sans CJK SC", sans-serif; }
.url { left: 2px; top: 130px; font: 400 44px/60px "Noto Sans", sans-serif; }
```
